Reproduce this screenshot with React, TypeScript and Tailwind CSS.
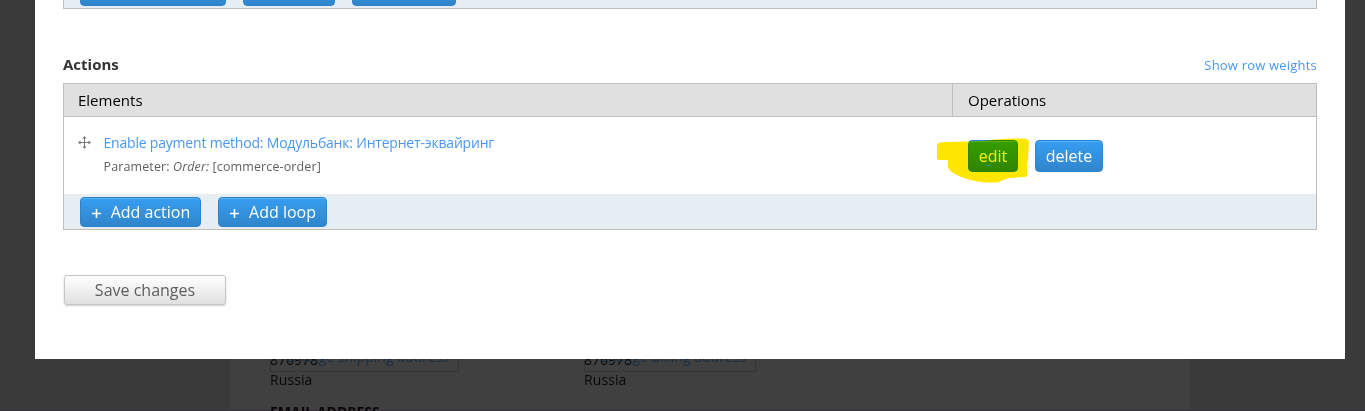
import type { ReactNode } from 'react';

function BlueButton({ className, children }: { className: string; children?: ReactNode }) {
  return (
    <button
      className={`flex shrink-0 items-center justify-center whitespace-nowrap rounded-[4px] border border-[#2b83cb] bg-linear-to-b from-[#369ef3] to-[#3085cb] text-[16px] leading-[24px] text-white shadow-[inset_0_1px_0_#5ab0f6] ${className}`}
    >
      {children}
    </button>
  );
}

function PlusIcon() {
  return (
    <svg className="mr-[10px] mt-[2px] shrink-0" width="9" height="9" viewBox="0 0 9 9" fill="none" stroke="#fff" strokeWidth="1.6">
      <path d="M0 4.5H9M4.5 0V9" />
    </svg>
  );
}

function DragIcon() {
  return (
    <svg className="mt-[19px] shrink-0" width="13" height="13" viewBox="0 0 13 13">
      <path d="M6.5 2V11M2 6.5H11" stroke="#777" fill="none" />
      <path
        d="M6.5 0L8.5 2.5H4.5ZM6.5 13L4.5 10.5H8.5ZM0 6.5L2.5 4.5V8.5ZM13 6.5L10.5 8.5V4.5Z"
        fill="#777"
      />
    </svg>
  );
}

function Address({ link, box }: { link: string; box: string }) {
  return (
    <div>
      <div className={`relative h-[24px] border border-[#353535] ${box}`}>
        <span className="absolute left-[-1px] top-[1px] text-[14px] leading-[20px] text-[#080808]">876978</span>
        <span className="absolute right-[9px] top-[-2px] whitespace-nowrap text-[14px] leading-[20px] text-[#192d42]">{link}</span>
      </div>
      <div className="mt-[-2px] text-[14px] leading-[20px] tracking-[0.1px] text-[#080808]">Russia</div>
    </div>
  );
}

function Backdrop() {
  return (
    <div className="flex h-[411px] border-b border-[#3b3037] bg-[#3a3a3a]">
      <div className="flex w-[230px]">
        <div className="w-[35px] border-r border-[#373737]" />
        <div className="w-[64px] border-r border-[#383838]" />
        <div className="w-[64px] border-r border-[#383838]" />
      </div>
      <div className="flex w-[960px] bg-[#404040] pl-[40px] pt-[348px]">
        <div className="w-[314px]">
          <Address link="Change shipping address" box="w-[189px]" />
          <div className="mt-[13px] whitespace-nowrap text-[14px] font-bold leading-[18px] text-[#070707]">EMAIL ADDRESS</div>
        </div>
        <Address link="Change billing address" box="w-[172px]" />
      </div>
      <div className="flex flex-1">
        <div className="w-[59px] border-r border-[#383838]" />
        <div className="w-[64px] border-r border-[#383838]" />
      </div>
    </div>
  );
}

export default function App() {
  return (
    <div className="relative h-[411px] w-[1365px] overflow-hidden font-['Open_Sans','Noto_Sans',sans-serif]">
      <Backdrop />
      <main className="absolute left-[35px] top-0 h-[359px] w-[1310px] bg-white px-[28px]">
        <div className="flex h-[9px] gap-[17px] overflow-hidden border border-t-0 border-[#bebfb9] bg-[#e6eef4] pl-[16px]">
          <BlueButton className="-mt-[24px] h-[30px] w-[146px]" />
          <BlueButton className="-mt-[24px] h-[30px] w-[92px]" />
          <BlueButton className="-mt-[24px] h-[30px] w-[104px]" />
        </div>
        <div className="flex h-[74px] items-start justify-between pt-[46px]">
          <h2 className="-mt-px text-[15px] font-bold leading-[20px] text-[#333]">Actions</h2>
          <a className="text-[13px] leading-[20px] tracking-[0.2px] text-[#4a97ee]">Show row weights</a>
        </div>
        <section className="border border-[#bebfb9]">
          <div className="flex h-[33px] border-b border-[#bebfb9] bg-[#e0e0e0] text-[15px] leading-[32px] text-black">
            <div className="w-[889px] border-r border-[#bebfb9] pl-[14px]">Elements</div>
            <div className="pl-[15px]">Operations</div>
          </div>
          <div className="flex h-[77px]">
            <div className="flex w-[889px] pl-[14px]">
              <DragIcon />
              <div className="ml-[12.5px] pt-[16px]">
                <a className="block whitespace-nowrap text-[14px] leading-[20px] tracking-[-0.2px] text-[#4a97ee]">
                  Enable payment method: Модульбанк: Интернет-эквайринг
                </a>
                <p className="mt-[5px] whitespace-nowrap text-[12.5px] leading-[18px] tracking-[0.12px] text-[#5f5f5f]">
                  Parameter: <em>Order:</em> [commerce-order]
                </p>
              </div>
            </div>
            <div className="relative flex gap-[17px] pl-[15px] pt-[23px]">
              <BlueButton className="h-[32px] w-[50px]">edit</BlueButton>
              <BlueButton className="h-[32px] w-[68px]">delete</BlueButton>
              <svg
                className="pointer-events-none absolute left-[-16px] top-[20px] mix-blend-darken"
                width="94"
                height="47"
                viewBox="0 0 94 47"
              >
                <path
                  fillRule="evenodd"
                  d="M0 7Q2 5 8 5L32 4.5L46 4L58 2.5L72 1.5L87 1.5Q92 2 92 5L91 23L90 26V38Q90 40 87 40L72 41L66 43L62 45Q56 46 44 45Q29 43 20 38Q11 34 11 29V23H3Q0 23 0 21ZM48 29Q52 27.5 56 28.5Q52 28.5 48 29Z"
                  fill="#ffe600"
                />
              </svg>
            </div>
          </div>
          <div className="flex h-[35px] gap-[17px] bg-[#e6eef4] pl-[16px] pt-[3px]">
            <BlueButton className="h-[30px] w-[121px] pl-px"><PlusIcon />Add action</BlueButton>
            <BlueButton className="h-[30px] w-[109px] pl-px"><PlusIcon />Add loop</BlueButton>
          </div>
        </section>
        <button className="ml-px mt-[45px] flex h-[30px] w-[162px] items-center justify-center rounded-[3px] border border-[#c6c6c6] bg-linear-to-b from-white to-[#e0e0e0] text-[16px] leading-[24px] text-[#5f5f5f] shadow-[0_1px_2px_rgba(0,0,0,0.2)]">
          Save changes
        </button>
      </main>
    </div>
  );
}
